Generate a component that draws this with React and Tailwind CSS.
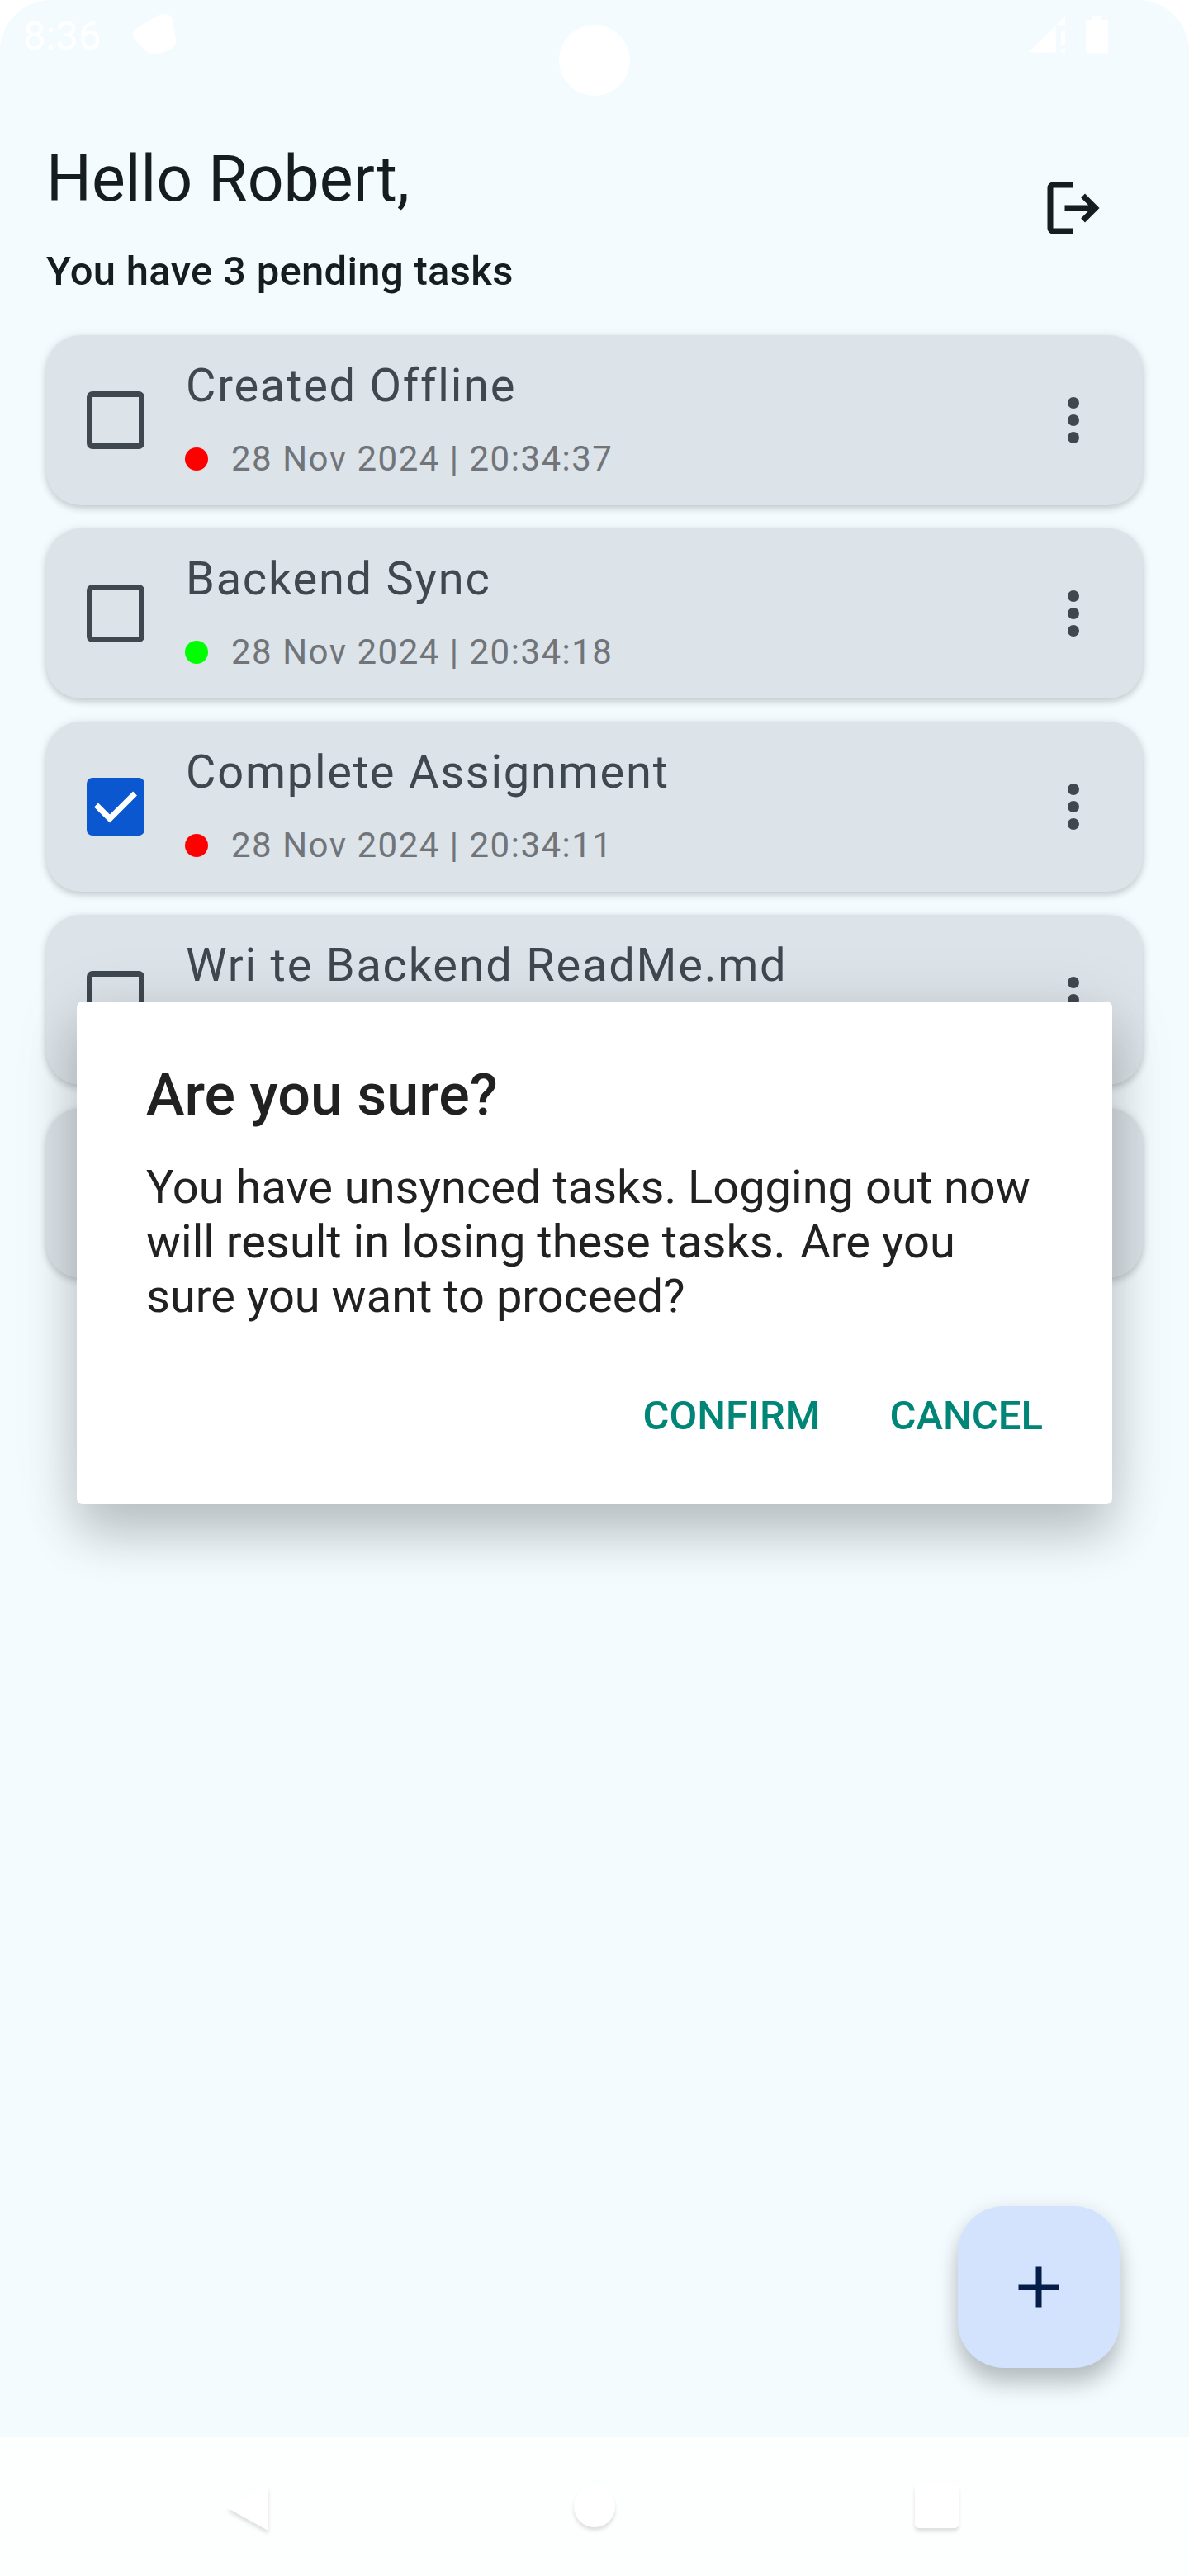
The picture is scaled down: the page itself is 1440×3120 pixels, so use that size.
const tasks = [
  { title: "Created Offline", time: "28 Nov 2024 | 20:34:37", synced: false, done: false },
  { title: "Backend Sync", time: "28 Nov 2024 | 20:34:18", synced: true, done: false },
  { title: "Complete Assignment", time: "28 Nov 2024 | 20:34:11", synced: false, done: true },
  { title: "Wri te Backend ReadMe.md", time: "", synced: true, done: false },
  { title: "", time: "", synced: true, done: true },
];

function StatusBar() {
  return (
    <div className="relative flex h-[147px] items-start pl-[28px] text-white">
      <span className="pt-[15px] text-[49px] leading-[58px]">8:36</span>
      <svg className="absolute left-[160px] top-[14px]" width="56" height="56" viewBox="160 14 56 56" fill="currentColor">
        <path d="M165 34.500L191 18.800Q206 12.500 209.500 26L213 49Q213.500 55 208 58.500Q199 64 190 65.800Q182 67.500 176.500 61.500L163.500 48Q158 40 165 34.500Z" />
      </svg>
      <div className="absolute left-[677px] top-[30px] h-[86px] w-[86px] rounded-full bg-white" />
      <svg className="absolute left-[1240px] top-[14px]" width="110" height="56" viewBox="1240 14 110 56" fill="currentColor">
        <path d="M1245.500 63.500L1278.700 31V63.500Z" />
        <path d="M1279 30.500L1290 19.500V30.500Z" />
        <path d="M1285 37h5v18h-5zM1285 59h5v4.500h-5z" />
        <path d="M1323 19h11v5h5.500q2.500 0 2.500 2.500v35.500q0 2.500-2.500 2.500h-22q-2.500 0-2.500-2.500v-35.500q0-2.500 2.500-2.500h5.500z" />
      </svg>
    </div>
  );
}

function Checkbox({ checked }) {
  if (!checked) {
    return <div className="h-[70px] w-[70px] shrink-0 rounded-[7px] border-[7px] border-[#40484f]" />;
  }
  return (
    <div className="h-[70px] w-[70px] shrink-0 rounded-[7px] bg-[#0b57d0]">
      <svg width="70" height="70" viewBox="0 0 70 70" fill="none">
        <path d="M11.500 33L28 49.500L58.500 19" stroke="white" strokeWidth="7" />
      </svg>
    </div>
  );
}

function TaskCard({ task }) {
  return (
    <div className="flex h-[206px] items-center rounded-[42px] bg-[#dce3e9] pl-[49px] pr-[42px] shadow-[0_4px_9px_rgba(0,0,0,0.17),0_0_14px_rgba(0,0,0,0.06)]">
      <Checkbox checked={task.done} />
      <div className="ml-[50px] flex h-full flex-1 flex-col pt-[19px]">
        <div className="h-[84px] text-[56px] leading-[84px] tracking-[1.75px] text-[#40484f]">{task.title}</div>
        <div className="mt-[19px] flex h-[56px] items-center">
          <span className={task.synced ? "-ml-px h-[28px] w-[28px] rounded-full bg-[#00ff00]" : "-ml-px h-[28px] w-[28px] rounded-full bg-[#ff0000]"} />
          <span className="ml-[28px] text-[42px] leading-[56px] tracking-[1.5px] text-[#717579]">{task.time}</span>
        </div>
      </div>
      <svg width="84" height="84" viewBox="0 0 24 24" fill="#40484f">
        <circle cx="12" cy="6" r="2" />
        <circle cx="12" cy="12" r="2" />
        <circle cx="12" cy="18" r="2" />
      </svg>
    </div>
  );
}

function LogoutDialog() {
  return (
    <div className="absolute left-[93px] top-[1213px] h-[609px] w-[1254px] rounded-[7px] bg-white px-[84px] pt-[72px] text-[#212121] shadow-[0_38px_60px_rgba(0,0,0,0.19),0_8px_84px_rgba(0,0,0,0.1)]">
      <h2 className="text-[70px] font-medium leading-[82px]">Are you sure?</h2>
      <p className="mt-[38px] whitespace-nowrap text-[56px] leading-[66px]">
        You have unsynced tasks. Logging out now
        <br />
        will result in losing these tasks. <span className="ml-[4px]">Are you</span>
        <br />
        sure you want to proceed?
      </p>
      <div className="mt-[83px] flex justify-end gap-[84px] text-[49px] font-medium leading-[58px] text-[#008577]">
        <button>CONFIRM</button>
        <button>CANCEL</button>
      </div>
    </div>
  );
}

function NavBar() {
  return (
    <div className="flex h-[168px] items-start justify-between bg-[#fdfefe] px-[260px] pt-[44px]">
      <svg width="80" height="80" viewBox="260 2996 80 80" className="overflow-visible drop-shadow-[0_4px_2px_rgba(0,0,0,0.12)]" fill="white">
        <path d="M277 3036.500L321 3011.500Q325 3009.500 325 3014V3061Q325 3065.500 321 3063L277 3038.500Q275.500 3037.500 277 3036.500Z" />
      </svg>
      <svg width="80" height="80" viewBox="680 2996 80 80" className="overflow-visible drop-shadow-[0_4px_2px_rgba(0,0,0,0.12)]" fill="white">
        <circle cx="720" cy="3036" r="25" />
      </svg>
      <svg width="80" height="80" viewBox="1100 2996 80 80" className="overflow-visible drop-shadow-[0_4px_2px_rgba(0,0,0,0.12)]" fill="white">
        <rect x="1108" y="3009" width="53" height="53" rx="5" />
      </svg>
    </div>
  );
}

export default function App() {
  return (
    <div className="relative h-[3120px] w-[1440px] overflow-hidden bg-white font-['Roboto',sans-serif]">
      <div className="h-[2952px] rounded-t-[62px] bg-[#f3fbff]">
        <StatusBar />
        <header className="flex h-[259px] justify-between px-[56px] text-[#171c20]">
          <div className="pt-[21px]">
            <h1 className="text-[77px] leading-[98px]">Hello Robert,</h1>
            <p className="mt-[28px] text-[49px] font-medium leading-[70px] tracking-[0.3px]">You have 3 pending tasks</p>
          </div>
          <svg className="mr-[42px] mt-[63px]" width="84" height="84" viewBox="0 -960 960 960" fill="currentColor">
            <path d="M200-120q-33 0-56.500-23.500T120-200v-560q0-33 23.500-56.500T200-840h280v80H200v560h280v80H200Zm440-160-55-58 102-102H360v-80h327L585-622l55-58 200 200-200 200Z" />
          </svg>
        </header>
        <main className="flex flex-col gap-[28px] px-[56px]">
          {tasks.map((task, i) => (
            <TaskCard key={i} task={task} />
          ))}
        </main>
      </div>
      <NavBar />
      <button className="absolute left-[1160px] top-[2672px] flex h-[196px] w-[196px] items-center justify-center rounded-[56px] bg-[#d3e3fd] shadow-[0_20px_26px_rgba(0,0,0,0.22),0_0_22px_rgba(0,0,0,0.07)]">
        <svg width="84" height="84" viewBox="0 0 24 24" fill="#041e49">
          <path d="M19 13h-6v6h-2v-6H5v-2h6V5h2v6h6z" />
        </svg>
      </button>
      <LogoutDialog />
    </div>
  );
}
